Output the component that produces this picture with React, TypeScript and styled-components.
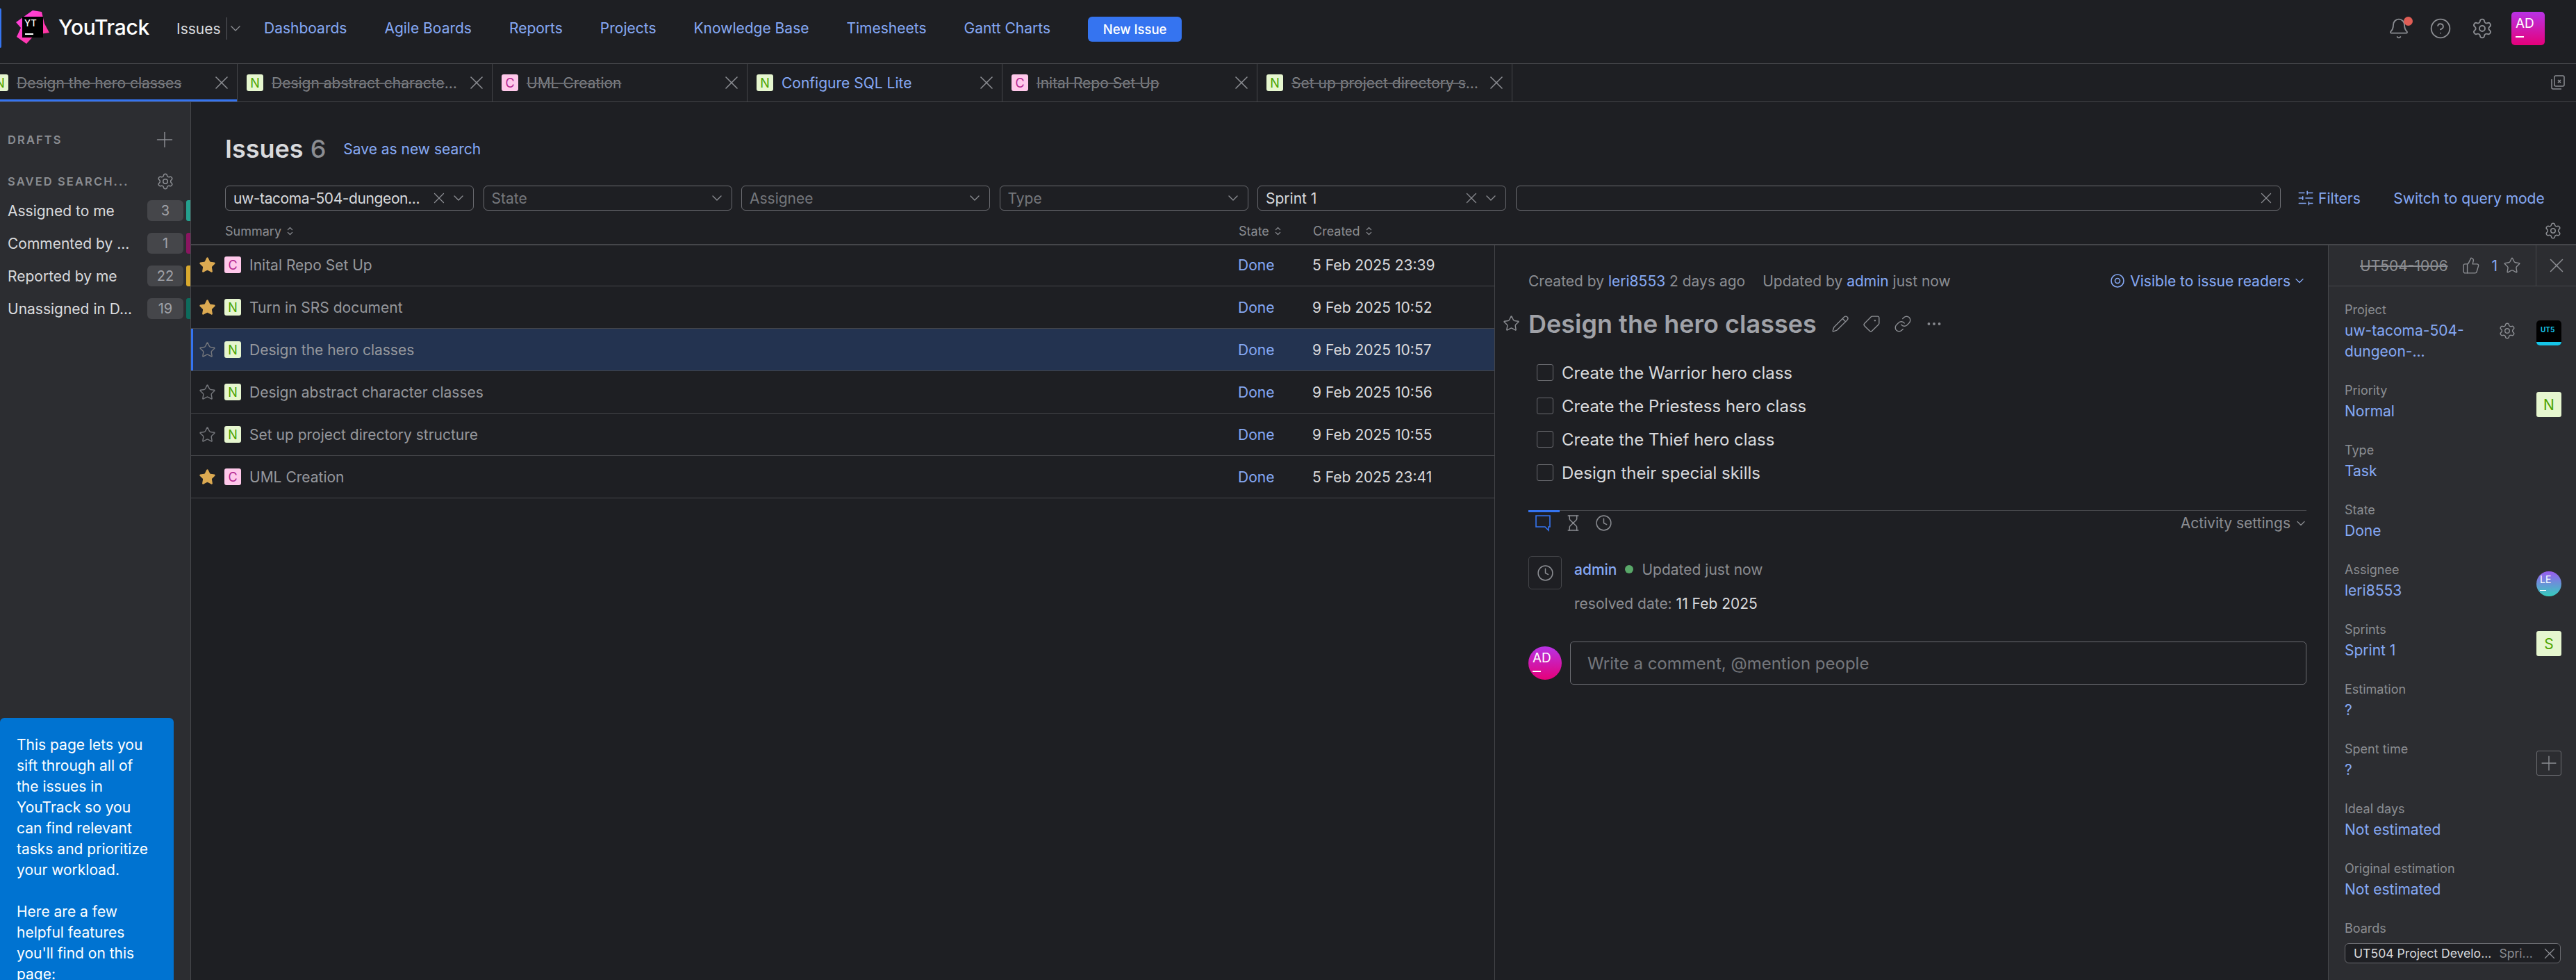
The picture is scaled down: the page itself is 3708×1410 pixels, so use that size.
import React from "react";
import styled, { createGlobalStyle } from "styled-components";
import {
  Bell,
  ChevronDown,
  ChevronsUpDown,
  CircleHelp,
  Clock,
  Ellipsis,
  Hourglass,
  Link,
  Pencil,
  Plus,
  Settings,
  SlidersHorizontal,
  Star,
  Tag,
  ThumbsUp,
  X,
} from "lucide-react";

const LINK = "#86a9f5";
const MUTED = "#8b8d92";
const TITLE = "#a0a2a8";
const TEXT = "#d9dadd";
const LINE = "#45464a";
const GOLD = "#dcaa52";

const GlobalStyle = createGlobalStyle`
  html, body { margin: 0; padding: 0; background: #1e1f23; }
  body { font-family: Inter, "Liberation Sans", sans-serif; font-size: 21px; color: ${TEXT}; }
  * { box-sizing: border-box; }
`;

const Page = styled.div`
  position: relative;
  width: 3708px;
  height: 1410px;
  overflow: hidden;
  display: flex;
  flex-direction: column;
  background: #1e1f23;
`;

/* top nav */
const NavBar = styled.header`
  flex: none;
  height: 92px;
  display: flex;
  align-items: flex-start;
  padding: 0 45px 0 23px;
  border-bottom: 1px solid ${LINE};
`;
const FocusMark = styled.div`
  position: absolute;
  left: 0;
  top: 12px;
  width: 2px;
  height: 57px;
  background: #3574f0;
  border-radius: 0 2px 2px 0;
`;
const LogoWrap = styled.div`
  position: relative;
  width: 48px;
  height: 48px;
  margin-top: 15px;
`;
const LogoSquare = styled.div`
  position: absolute;
  left: 9px;
  top: 9px;
  width: 30px;
  height: 30px;
  background: #000;
  color: #fff;
  font-size: 13px;
  line-height: 13px;
  padding: 3px 0 0 3px;
  font-weight: 500;
  &::after {
    content: "";
    position: absolute;
    left: 4px;
    bottom: 4px;
    width: 12px;
    height: 2px;
    background: #fff;
  }
`;
const Brand = styled.span`
  margin: 16px 0 0 13px;
  width: 137px;
  font-size: 30px;
  line-height: 46px;
  font-weight: 500;
  color: #fff;
  letter-spacing: -0.3px;
`;
const IssuesNav = styled.div`
  display: flex;
  align-items: center;
  height: 32px;
  margin: 25px 0 0 33px;
  width: 126px;
  color: ${TEXT};
  gap: 8px;
`;
const NavSep = styled.span`
  width: 1px;
  height: 32px;
  background: #5a5b60;
`;
const NavChevron = styled(ChevronDown)`
  margin-left: -8px;
`;
const NavLinks = styled.nav`
  display: flex;
  gap: 54px;
  margin-top: 25px;
  line-height: 32px;
  color: ${LINK};
`;
const NewIssue = styled.button`
  margin: 24px 0 0 54px;
  width: 135px;
  height: 36px;
  border: 0;
  border-radius: 6px;
  background: #3574f0;
  color: #fff;
  font: 500 18.5px Inter, sans-serif;
`;
const NavRight = styled.div`
  margin-left: auto;
  display: flex;
  align-items: flex-start;
  color: ${MUTED};
`;
const NavIcon = styled.span`
  position: relative;
  display: flex;
  justify-content: center;
  width: 60px;
  margin-top: 25px;
`;
const Dot = styled.span`
  position: absolute;
  right: 10px;
  top: -1px;
  width: 13px;
  height: 13px;
  border-radius: 50%;
  background: #e05d55;
`;
const Avatar = styled.div<{ $size: number; $round?: boolean; $from: string; $to: string }>`
  position: relative;
  flex: none;
  width: ${(p) => p.$size}px;
  height: ${(p) => p.$size}px;
  border-radius: ${(p) => (p.$round ? "50%" : "5px")};
  background: linear-gradient(180deg, ${(p) => p.$from}, ${(p) => p.$to});
  color: #fff;
  font-size: ${(p) => Math.round(p.$size * 0.4)}px;
  line-height: ${(p) => Math.round(p.$size * 0.4)}px;
  padding: ${(p) => Math.round(p.$size * 0.14)}px 0 0 ${(p) => Math.round(p.$size * 0.13)}px;
  &::after {
    content: "";
    position: absolute;
    left: ${(p) => Math.round(p.$size * 0.13)}px;
    bottom: ${(p) => Math.round(p.$size * 0.22)}px;
    width: ${(p) => Math.round(p.$size * 0.25)}px;
    height: ${(p) => (p.$size > 40 ? 2 : 1)}px;
    background: #fff;
  }
`;
const TopAvatar = styled(Avatar)`
  margin: 17px 0 0 12px;
`;

/* open issue tabs */
const TabStrip = styled.div`
  flex: none;
  height: 55px;
  display: flex;
  border-bottom: 1px solid ${LINE};
  margin-left: -25px;
  position: relative;
`;
const Tab = styled.div<{ $active?: boolean }>`
  position: relative;
  width: 367px;
  height: 54px;
  display: flex;
  align-items: center;
  padding: 0 6px 0 13px;
  gap: 12px;
  border-right: 1px solid ${LINE};
  &::after {
    content: "";
    display: ${(p) => (p.$active ? "block" : "none")};
    position: absolute;
    left: 25px;
    right: 0;
    bottom: 0;
    height: 3px;
    background: #3574f0;
  }
`;
const Badge = styled.span<{ $kind: "N" | "C" | "S" }>`
  flex: none;
  display: flex;
  align-items: center;
  justify-content: center;
  width: 24px;
  height: 24px;
  border-radius: 3px;
  font-size: 18px;
  background: ${(p) => (p.$kind === "C" ? "#ffc8ea" : "#e6f6cf")};
  color: ${(p) => (p.$kind === "C" ? "#b3268f" : "#4da400")};
`;
const TabTitle = styled.span<{ $open?: boolean }>`
  flex: 1;
  min-width: 0;
  white-space: nowrap;
  overflow: hidden;
  text-overflow: ellipsis;
  color: ${(p) => (p.$open ? LINK : "#7e8085")};
  text-decoration: ${(p) => (p.$open ? "none" : "line-through")};
  text-decoration-color: #66686d;
`;
const CloseBtn = styled(X)`
  flex: none;
  margin-left: -4px;
  color: ${MUTED};
`;
const CloseAllIcon = styled.svg`
  position: absolute;
  right: 14px;
  top: 15px;
  color: ${MUTED};
`;

const Body = styled.div`
  flex: 1;
  min-height: 0;
  display: flex;
`;

/* left sidebar */
const Sidebar = styled.aside`
  flex: none;
  width: 275px;
  background: #2c2d31;
  border-right: 1px solid ${LINE};
  padding-top: 42px;
`;
const SideHead = styled.div<{ $gap: number }>`
  display: flex;
  align-items: center;
  justify-content: space-between;
  height: 24px;
  margin-bottom: ${(p) => p.$gap}px;
  padding: 0 23px 0 11px;
  color: ${MUTED};
  font-size: 16.5px;
  font-weight: 600;
  letter-spacing: 2.1px;
  white-space: nowrap;
`;
const DraftPlus = styled(Plus)`
  flex: none;
  margin-right: -4px;
`;
const SavedRow = styled.div`
  display: flex;
  align-items: center;
  height: 30px;
  margin-bottom: 17px;
  padding-left: 11px;
  color: ${TEXT};
`;
const SavedName = styled.span`
  width: 201px;
  white-space: nowrap;
`;
const Count = styled.span`
  flex: none;
  width: 52px;
  height: 30px;
  border-radius: 6px;
  background: #45464a;
  color: ${TITLE};
  text-align: center;
  line-height: 30px;
  font-size: 20px;
`;
const ColorBar = styled.span<{ $color: string }>`
  flex: none;
  width: 6px;
  height: 30px;
  margin-left: 4px;
  border-radius: 3px 0 0 3px;
  background: ${(p) => p.$color};
`;
const HelpTip = styled.div`
  position: absolute;
  left: 0;
  top: 1033px;
  width: 250px;
  height: 400px;
  padding: 24px 31px 0 24px;
  border-radius: 6px 6px 0 0;
  background: #0073d1;
  color: #fff;
  line-height: 30px;
  p {
    margin: 0 0 30px;
  }
`;

/* main */
const Main = styled.main`
  flex: 1;
  min-width: 0;
  display: flex;
  flex-direction: column;
`;
const SearchPanel = styled.section`
  flex: none;
  height: 206px;
  padding: 45px 0 0 49px;
  border-bottom: 2px solid ${LINE};
`;
const TitleRow = styled.div`
  display: flex;
  align-items: center;
  height: 44px;
`;
const PageTitle = styled.h1`
  margin: 0;
  font-size: 36px;
  line-height: 44px;
  font-weight: 600;
  color: ${TEXT};
  span {
    margin-left: 10px;
    color: ${MUTED};
    font-weight: 500;
  }
`;
const SaveLink = styled.span`
  margin-left: 25px;
  color: ${LINK};
`;
const FilterRow = styled.div`
  display: flex;
  align-items: center;
  gap: 13.5px;
  margin-top: 31px;
  height: 36px;
`;
const SelectBox = styled.div<{ $filled?: boolean }>`
  flex: none;
  width: 358px;
  height: 36px;
  display: flex;
  align-items: center;
  gap: 3px;
  padding: 0 9px 0 11px;
  border: 1.5px solid #6a6b70;
  border-radius: 6px;
  color: ${(p) => (p.$filled ? TEXT : "#75777c")};
`;
const SelectText = styled.span<{ $tight?: boolean }>`
  flex: 1;
  white-space: nowrap;
  overflow: hidden;
  letter-spacing: ${(p) => (p.$tight ? "-0.4px" : "normal")};
`;
const SearchBox = styled(SelectBox)`
  width: 1101px;
  justify-content: flex-end;
  padding-right: 7px;
`;
const FiltersLink = styled.span`
  display: flex;
  align-items: center;
  gap: 5px;
  margin-left: 10px;
  color: ${LINK};
`;
const QueryLink = styled.span`
  margin-left: 34px;
  color: ${LINK};
  white-space: nowrap;
`;
const ColumnRow = styled.div`
  position: relative;
  display: flex;
  align-items: center;
  height: 24px;
  margin-top: 17px;
  color: ${MUTED};
  font-size: 18px;
`;
const ColumnHead = styled.span<{ $width: number }>`
  display: flex;
  align-items: center;
  gap: 5px;
  width: ${(p) => p.$width}px;
`;
const ColumnGear = styled(Settings)`
  position: absolute;
  right: 20px;
  top: -1px;
`;

const Content = styled.div`
  flex: 1;
  min-height: 0;
  display: flex;
`;
const IssueList = styled.div`
  flex: none;
  width: 1876px;
  margin-top: -2px;
`;
const Row = styled.div<{ $selected?: boolean }>`
  height: 61px;
  display: flex;
  align-items: center;
  padding-left: 11px;
  border-bottom: 1px solid ${LINE};
  background: ${(p) => (p.$selected ? "#233350" : "transparent")};
  box-shadow: ${(p) => (p.$selected ? "inset 3px 0 0 #3574f0" : "none")};
`;
const RowStar = styled(Star)`
  flex: none;
  margin-right: 12px;
`;
const RowTitle = styled.span`
  margin-left: 12px;
  width: 1423px;
  color: #96989d;
`;
const RowState = styled.span`
  width: 107px;
  color: ${LINK};
`;
const RowDate = styled.span`
  color: ${TEXT};
`;

/* issue detail */
const Detail = styled.section`
  flex: 1;
  min-width: 0;
  border-left: 1px solid ${LINE};
  padding: 38px 31px 0 48px;
`;
const MetaRow = styled.div`
  display: flex;
  align-items: center;
  height: 26px;
  color: ${MUTED};
  gap: 25px;
  b {
    font-weight: 400;
    color: ${LINK};
  }
`;
const Visibility = styled.span`
  margin-left: auto;
  display: flex;
  align-items: center;
  gap: 7px;
  color: ${LINK};
  svg:last-child {
    margin-left: -4px;
  }
`;
const TitleLine = styled.div`
  position: relative;
  display: flex;
  align-items: center;
  height: 44px;
  margin-top: 27px;
  color: ${MUTED};
  gap: 19px;
`;
const DetailStar = styled(Star)`
  position: absolute;
  left: -37px;
  top: 9px;
`;
const IssueTitle = styled.h2`
  margin: 0 2px 0 0;
  font-size: 36px;
  font-weight: 600;
  line-height: 44px;
  color: ${TITLE};
  white-space: nowrap;
`;
const FlippedTag = styled(Tag)`
  transform: scaleX(-1);
`;
const Checklist = styled.ul`
  list-style: none;
  margin: 24px 0 0;
  padding: 0 0 0 12px;
`;
const CheckItem = styled.li`
  display: flex;
  align-items: center;
  gap: 12px;
  height: 48px;
  font-size: 24px;
  color: ${TEXT};
`;
const CheckBox = styled.span`
  flex: none;
  width: 24px;
  height: 24px;
  border: 1.5px solid #6a6b70;
  border-radius: 3px;
`;
const ActivityTabs = styled.div`
  position: relative;
  display: flex;
  align-items: center;
  height: 36px;
  margin-top: 30px;
  padding: 0 9px;
  gap: 19px;
  border-top: 1px solid ${LINE};
  color: ${MUTED};
  &::before {
    content: "";
    position: absolute;
    left: 0;
    top: -1px;
    width: 45px;
    height: 3px;
    background: #3574f0;
  }
`;
const ActivitySettings = styled.span`
  margin-left: auto;
  margin-right: -11px;
  display: flex;
  align-items: center;
  gap: 5px;
`;
const ActivityItem = styled.div`
  display: flex;
  gap: 18px;
  margin-top: 30px;
`;
const ActivityIconBox = styled.span`
  flex: none;
  display: flex;
  align-items: center;
  justify-content: center;
  width: 48px;
  height: 48px;
  border: 1px solid ${LINE};
  border-radius: 5px;
  color: ${MUTED};
`;
const ActivityHead = styled.div`
  display: flex;
  align-items: center;
  gap: 12px;
  height: 38px;
  color: ${MUTED};
  b {
    font-weight: 500;
    color: ${LINK};
  }
  i {
    width: 12px;
    height: 12px;
    border-radius: 50%;
    background: #59a869;
  }
`;
const ActivityNote = styled.div`
  margin-top: 18px;
  line-height: 26px;
  color: ${MUTED};
  b {
    font-weight: 400;
    color: ${TEXT};
  }
`;
const CommentRow = styled.div`
  display: flex;
  align-items: center;
  gap: 12px;
  margin-top: 41px;
`;
const CommentInput = styled.div`
  flex: 1;
  height: 62px;
  display: flex;
  align-items: center;
  padding-left: 24px;
  border: 1.5px solid #6a6b70;
  border-radius: 5px;
  font-size: 24px;
  color: #75777c;
`;

/* issue fields */
const Fields = styled.aside`
  flex: none;
  width: 357px;
  background: #2c2d31;
  border-left: 1px solid ${LINE};
`;
const FieldsHead = styled.div`
  height: 59px;
  display: flex;
  align-items: center;
  border-bottom: 1px solid ${LINE};
  color: ${MUTED};
`;
const IssueId = styled.span`
  margin-left: 45px;
  color: #8b8d92;
  text-decoration: line-through;
`;
const Thumb = styled(ThumbsUp)`
  margin-left: 21px;
`;
const Votes = styled.span`
  color: ${LINK};
  margin-left: 16px;
`;
const HeadStar = styled(Star)`
  margin-left: 8px;
`;
const HeadClose = styled.span`
  margin-left: auto;
  width: 58px;
  height: 58px;
  display: flex;
  align-items: center;
  justify-content: center;
  border-left: 1px solid ${LINE};
`;
const FieldList = styled.div`
  padding: 19px 21px 0 23px;
`;
const Field = styled.div`
  position: relative;
  margin-bottom: 26px;
  min-height: 60px;
`;
const FieldLabel = styled.div`
  height: 30px;
  line-height: 30px;
  font-size: 18px;
  color: ${MUTED};
`;
const FieldValue = styled.div`
  width: 190px;
  line-height: 30px;
  color: ${LINK};
  white-space: nowrap;
`;
const FieldSide = styled.div<{ $top?: number }>`
  position: absolute;
  right: 0;
  top: ${(p) => p.$top ?? 17}px;
`;
const ProjectGear = styled(Settings)`
  position: absolute;
  left: 221px;
  top: 32px;
  color: ${MUTED};
`;
const ProjectIcon = styled.div`
  position: relative;
  width: 36px;
  height: 36px;
  border-radius: 5px;
  background: #000;
  overflow: hidden;
  color: #16c5e8;
  font-size: 10px;
  line-height: 12px;
  font-weight: 700;
  padding: 7px 0 0 6px;
  &::after {
    content: "";
    position: absolute;
    left: 0;
    right: 0;
    bottom: 0;
    height: 5px;
    background: #16c5e8;
  }
`;
const SideBadge = styled(Badge)`
  width: 36px;
  height: 36px;
  font-size: 21px;
  border-radius: 3px;
`;
const AddBox = styled.span`
  display: flex;
  align-items: center;
  justify-content: center;
  width: 36px;
  height: 36px;
  border: 1px solid #6a6b70;
  border-radius: 3px;
  color: ${MUTED};
`;
const BoardChip = styled.div`
  display: flex;
  align-items: center;
  width: 311px;
  height: 29px;
  margin-top: 6px;
  padding: 0 2px 0 12px;
  border: 1px solid #6a6b70;
  border-radius: 6px;
  background: #1e1f23;
  font-size: 17.6px;
  color: ${TEXT};
  white-space: nowrap;
  span {
    margin-left: 11px;
    color: ${MUTED};
  }
  svg {
    margin-left: auto;
    color: ${MUTED};
  }
`;

type Kind = "N" | "C";

const tabs: { kind: Kind; title: string; open?: boolean }[] = [
  { kind: "N", title: "Design the hero classes" },
  { kind: "N", title: "Design abstract character classes" },
  { kind: "C", title: "UML Creation" },
  { kind: "N", title: "Configure SQL Lite", open: true },
  { kind: "C", title: "Inital Repo Set Up" },
  { kind: "N", title: "Set up project directory structure" },
];

const saved = [
  { name: "Assigned to me", count: 3, color: "#24a08e" },
  { name: "Commented by ...", count: 1, color: "#8a1560" },
  { name: "Reported by me", count: 22, color: "#d9a92e" },
  { name: "Unassigned in D...", count: 19, color: "#0d6b5c" },
];

const issues: { kind: Kind; title: string; date: string; starred?: boolean; selected?: boolean }[] = [
  { kind: "C", title: "Inital Repo Set Up", date: "5 Feb 2025 23:39", starred: true },
  { kind: "N", title: "Turn in SRS document", date: "9 Feb 2025 10:52", starred: true },
  { kind: "N", title: "Design the hero classes", date: "9 Feb 2025 10:57", selected: true },
  { kind: "N", title: "Design abstract character classes", date: "9 Feb 2025 10:56" },
  { kind: "N", title: "Set up project directory structure", date: "9 Feb 2025 10:55" },
  { kind: "C", title: "UML Creation", date: "5 Feb 2025 23:41", starred: true },
];

const checklist = [
  "Create the Warrior hero class",
  "Create the Priestess hero class",
  "Create the Thief hero class",
  "Design their special skills",
];

const selects = [
  { label: "uw-tacoma-504-dungeon...", filled: true, tight: true },
  { label: "State" },
  { label: "Assignee" },
  { label: "Type" },
  { label: "Sprint 1", filled: true },
];

const simpleFields = [
  { label: "Type", value: "Task" },
  { label: "State", value: "Done" },
];

const Logo = () => (
  <LogoWrap>
    <svg width="48" height="48" viewBox="0 0 48 48">
      <defs>
        <linearGradient id="yt" x1="0" y1="0" x2="1" y2="1">
          <stop offset="0" stopColor="#ff45ed" />
          <stop offset="1" stopColor="#ff318c" />
        </linearGradient>
      </defs>
      <path d="M0 17 24 0 37 2 41 19 48 32 27 35 15 48 1 38 7 25Z" fill="url(#yt)" />
    </svg>
    <LogoSquare>YT</LogoSquare>
  </LogoWrap>
);

const CommentTabIcon = () => (
  <svg width="24" height="26" viewBox="0 0 24 26" fill="none" stroke="#3574f0" strokeWidth="1.6">
    <path d="M2 2h20v16h-2v5l-5-5H2Z" />
  </svg>
);

const App: React.FC = () => {
  return (
    <Page>
      <GlobalStyle />
      <FocusMark />
      <NavBar>
        <Logo />
        <Brand>YouTrack</Brand>
        <IssuesNav>
          Issues
          <NavSep />
          <NavChevron size={24} strokeWidth={1.4} color={MUTED} />
        </IssuesNav>
        <NavLinks>
          <span>Dashboards</span>
          <span>Agile Boards</span>
          <span>Reports</span>
          <span>Projects</span>
          <span>Knowledge Base</span>
          <span>Timesheets</span>
          <span>Gantt Charts</span>
        </NavLinks>
        <NewIssue>New Issue</NewIssue>
        <NavRight>
          <NavIcon>
            <Bell size={32} strokeWidth={1.4} />
            <Dot />
          </NavIcon>
          <NavIcon>
            <CircleHelp size={32} strokeWidth={1.4} />
          </NavIcon>
          <NavIcon>
            <Settings size={32} strokeWidth={1.4} />
          </NavIcon>
          <TopAvatar $size={48} $from="#b833e6" $to="#e6007a">
            AD
          </TopAvatar>
        </NavRight>
      </NavBar>

      <TabStrip>
        {tabs.map((tab, i) => (
          <Tab key={tab.title} $active={i === 0}>
            <Badge $kind={tab.kind}>{tab.kind}</Badge>
            <TabTitle $open={tab.open}>{tab.title}</TabTitle>
            <CloseBtn size={32} strokeWidth={1.2} />
          </Tab>
        ))}
        <CloseAllIcon width="24" height="24" viewBox="0 0 24 24" fill="none" stroke="currentColor" strokeWidth="1.5">
          <rect x="7" y="2" width="14" height="15" rx="2" />
          <path d="M3 7v12a2 2 0 0 0 2 2h12M12 8l4 4M16 8l-4 4" />
        </CloseAllIcon>
      </TabStrip>

      <Body>
        <Sidebar>
          <SideHead $gap={36}>
            DRAFTS
            <DraftPlus size={36} strokeWidth={1} />
          </SideHead>
          <SideHead $gap={15}>
            SAVED SEARCH...
            <Settings size={26} strokeWidth={1.4} />
          </SideHead>
          {saved.map((s) => (
            <SavedRow key={s.name}>
              <SavedName>{s.name}</SavedName>
              <Count>{s.count}</Count>
              <ColorBar $color={s.color} />
            </SavedRow>
          ))}
        </Sidebar>
        <HelpTip>
          <p>This page lets you sift through all of the issues in YouTrack so you can find relevant tasks and prioritize your workload.</p>
          <p>Here are a few helpful features you'll find on this page:</p>
        </HelpTip>

        <Main>
          <SearchPanel>
            <TitleRow>
              <PageTitle>
                Issues<span>6</span>
              </PageTitle>
              <SaveLink>Save as new search</SaveLink>
            </TitleRow>
            <FilterRow>
              {selects.map((s) => (
                <SelectBox key={s.label} $filled={s.filled}>
                  <SelectText $tight={s.tight}>{s.label}</SelectText>
                  {s.filled && <X size={26} strokeWidth={1.2} color={MUTED} />}
                  <ChevronDown size={24} strokeWidth={1.4} color={MUTED} />
                </SelectBox>
              ))}
              <SearchBox>
                <X size={26} strokeWidth={1.2} color={MUTED} />
              </SearchBox>
              <FiltersLink>
                <SlidersHorizontal size={26} strokeWidth={1.4} />
                Filters
              </FiltersLink>
              <QueryLink>Switch to query mode</QueryLink>
            </FilterRow>
            <ColumnRow>
              <ColumnHead $width={1459}>
                Summary
                <ChevronsUpDown size={15} />
              </ColumnHead>
              <ColumnHead $width={107}>
                State
                <ChevronsUpDown size={15} />
              </ColumnHead>
              <ColumnHead $width={120}>
                Created
                <ChevronsUpDown size={15} />
              </ColumnHead>
              <ColumnGear size={26} strokeWidth={1.4} />
            </ColumnRow>
          </SearchPanel>

          <Content>
            <IssueList>
              {issues.map((issue) => (
                <Row key={issue.title} $selected={issue.selected}>
                  <RowStar
                    size={25}
                    strokeWidth={1.4}
                    color={issue.starred ? GOLD : "#75777c"}
                    fill={issue.starred ? GOLD : "none"}
                  />
                  <Badge $kind={issue.kind}>{issue.kind}</Badge>
                  <RowTitle>{issue.title}</RowTitle>
                  <RowState>Done</RowState>
                  <RowDate>{issue.date}</RowDate>
                </Row>
              ))}
            </IssueList>

            <Detail>
              <MetaRow>
                <span>
                  Created by <b>leri8553</b> 2 days ago
                </span>
                <span>
                  Updated by <b>admin</b> just now
                </span>
                <Visibility>
                  <svg width="22" height="22" viewBox="0 0 22 22" fill="none" stroke="currentColor" strokeWidth="1.6">
                    <circle cx="11" cy="11" r="9" />
                    <circle cx="11" cy="11" r="3.5" />
                  </svg>
                  Visible to issue readers
                  <ChevronDown size={20} strokeWidth={1.5} />
                </Visibility>
              </MetaRow>
              <TitleLine>
                <DetailStar size={25} strokeWidth={1.4} />
                <IssueTitle>Design the hero classes</IssueTitle>
                <Pencil size={26} strokeWidth={1.3} />
                <FlippedTag size={26} strokeWidth={1.3} />
                <Link size={26} strokeWidth={1.3} />
                <Ellipsis size={26} strokeWidth={1.5} />
              </TitleLine>
              <Checklist>
                {checklist.map((c) => (
                  <CheckItem key={c}>
                    <CheckBox />
                    {c}
                  </CheckItem>
                ))}
              </Checklist>
              <ActivityTabs>
                <CommentTabIcon />
                <Hourglass size={25} strokeWidth={1.4} />
                <Clock size={25} strokeWidth={1.4} />
                <ActivitySettings>
                  Activity settings
                  <ChevronDown size={20} strokeWidth={1.5} />
                </ActivitySettings>
              </ActivityTabs>
              <ActivityItem>
                <ActivityIconBox>
                  <Clock size={25} strokeWidth={1.4} />
                </ActivityIconBox>
                <div>
                  <ActivityHead>
                    <b>admin</b>
                    <i />
                    Updated just now
                  </ActivityHead>
                  <ActivityNote>
                    resolved date: <b>11 Feb 2025</b>
                  </ActivityNote>
                </div>
              </ActivityItem>
              <CommentRow>
                <Avatar $size={48} $round $from="#b833e6" $to="#e6007a">
                  AD
                </Avatar>
                <CommentInput>Write a comment, @mention people</CommentInput>
              </CommentRow>
            </Detail>

            <Fields>
              <FieldsHead>
                <IssueId>UT504-1006</IssueId>
                <Thumb size={26} strokeWidth={1.3} />
                <Votes>1</Votes>
                <HeadStar size={26} strokeWidth={1.3} />
                <HeadClose>
                  <X size={34} strokeWidth={1.1} />
                </HeadClose>
              </FieldsHead>
              <FieldList>
                <Field>
                  <FieldLabel>Project</FieldLabel>
                  <FieldValue>
                    uw-tacoma-504-
                    <br />
                    dungeon-...
                  </FieldValue>
                  <ProjectGear size={26} strokeWidth={1.3} />
                  <FieldSide $top={30}>
                    <ProjectIcon>UT5</ProjectIcon>
                  </FieldSide>
                </Field>
                <Field>
                  <FieldLabel>Priority</FieldLabel>
                  <FieldValue>Normal</FieldValue>
                  <FieldSide>
                    <SideBadge $kind="N">N</SideBadge>
                  </FieldSide>
                </Field>
                {simpleFields.map((f) => (
                  <Field key={f.label}>
                    <FieldLabel>{f.label}</FieldLabel>
                    <FieldValue>{f.value}</FieldValue>
                  </Field>
                ))}
                <Field>
                  <FieldLabel>Assignee</FieldLabel>
                  <FieldValue>leri8553</FieldValue>
                  <FieldSide>
                    <Avatar $size={36} $round $from="#9a5cf0" $to="#35cdbd">
                      LE
                    </Avatar>
                  </FieldSide>
                </Field>
                <Field>
                  <FieldLabel>Sprints</FieldLabel>
                  <FieldValue>Sprint 1</FieldValue>
                  <FieldSide>
                    <SideBadge $kind="S">S</SideBadge>
                  </FieldSide>
                </Field>
                <Field>
                  <FieldLabel>Estimation</FieldLabel>
                  <FieldValue>?</FieldValue>
                </Field>
                <Field>
                  <FieldLabel>Spent time</FieldLabel>
                  <FieldValue>?</FieldValue>
                  <FieldSide>
                    <AddBox>
                      <Plus size={34} strokeWidth={1} />
                    </AddBox>
                  </FieldSide>
                </Field>
                <Field>
                  <FieldLabel>Ideal days</FieldLabel>
                  <FieldValue>Not estimated</FieldValue>
                </Field>
                <Field>
                  <FieldLabel>Original estimation</FieldLabel>
                  <FieldValue>Not estimated</FieldValue>
                </Field>
                <Field>
                  <FieldLabel>Boards</FieldLabel>
                  <BoardChip>
                    UT504 Project Develo...
                    <span>Spri...</span>
                    <X size={26} strokeWidth={1.2} />
                  </BoardChip>
                </Field>
              </FieldList>
            </Fields>
          </Content>
        </Main>
      </Body>
    </Page>
  );
};

export default App;
